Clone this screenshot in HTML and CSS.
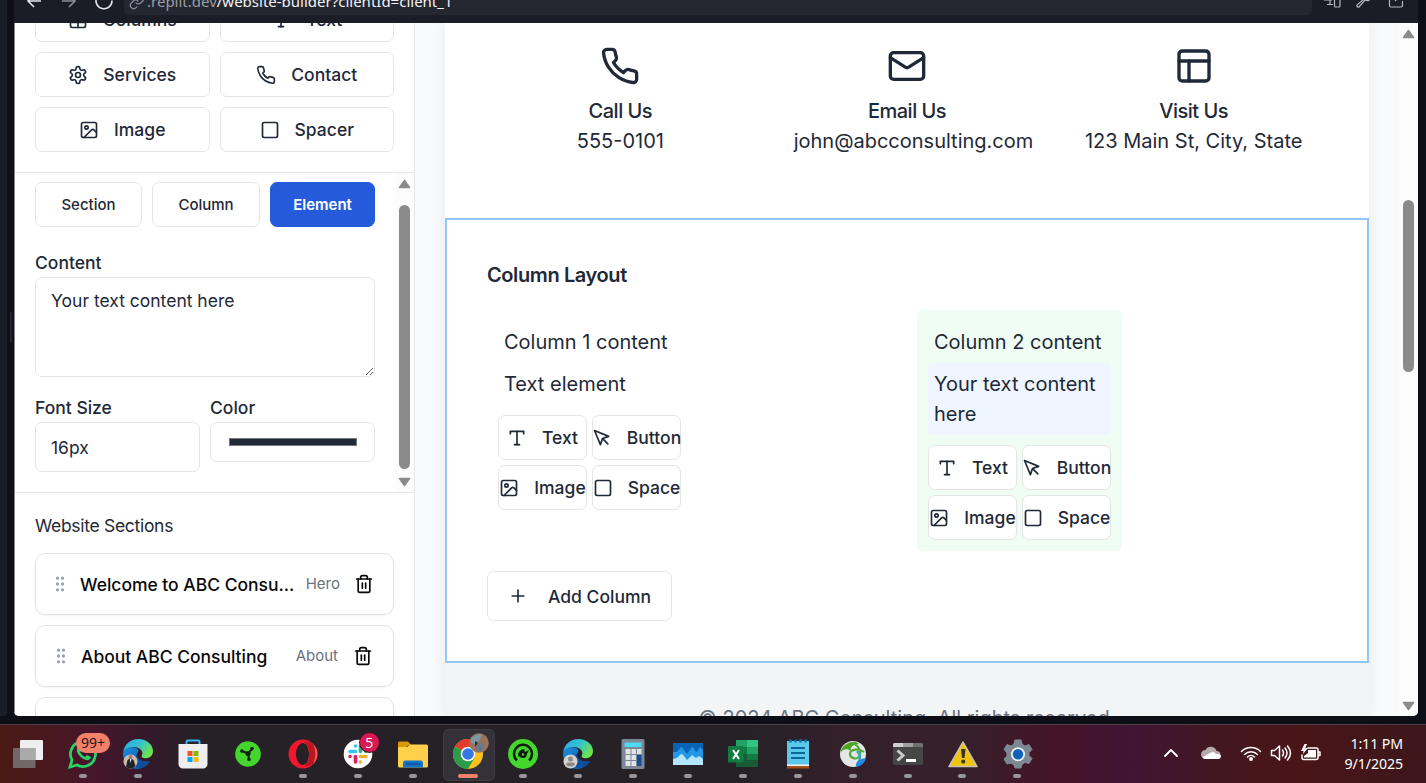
FILE: index.html
```html
<!DOCTYPE html>
<html lang="en">
<head>
<meta charset="utf-8">
<title>Website Builder</title>
<link rel="stylesheet" href="styles.css">
</head>
<body>
<svg class="defs" width="0" height="0" aria-hidden="true">
  <symbol id="i-table" viewBox="0 0 24 24"><path d="M12 3v18"/><rect width="18" height="18" x="3" y="3" rx="2"/><path d="M3 9h18"/><path d="M3 15h18"/></symbol>
  <symbol id="i-type" viewBox="0 0 24 24"><path d="M4 7V4h16v3"/><path d="M9 20h6"/><path d="M12 4v16"/></symbol>
  <symbol id="i-settings" viewBox="0 0 24 24"><path d="M12.22 2h-.44a2 2 0 0 0-2 2v.18a2 2 0 0 1-1 1.73l-.43.25a2 2 0 0 1-2 0l-.15-.08a2 2 0 0 0-2.73.73l-.22.38a2 2 0 0 0 .73 2.73l.15.1a2 2 0 0 1 1 1.72v.51a2 2 0 0 1-1 1.74l-.15.09a2 2 0 0 0-.73 2.73l.22.38a2 2 0 0 0 2.73.73l.15-.08a2 2 0 0 1 2 0l.43.25a2 2 0 0 1 1 1.73V20a2 2 0 0 0 2 2h.44a2 2 0 0 0 2-2v-.18a2 2 0 0 1 1-1.73l.43-.25a2 2 0 0 1 2 0l.15.08a2 2 0 0 0 2.73-.73l.22-.39a2 2 0 0 0-.73-2.73l-.15-.08a2 2 0 0 1-1-1.74v-.5a2 2 0 0 1 1-1.74l.15-.09a2 2 0 0 0 .73-2.73l-.22-.38a2 2 0 0 0-2.73-.73l-.15.08a2 2 0 0 1-2 0l-.43-.25a2 2 0 0 1-1-1.73V4a2 2 0 0 0-2-2z"/><circle cx="12" cy="12" r="3"/></symbol>
  <symbol id="i-phone" viewBox="0 0 24 24"><path d="M22 16.92v3a2 2 0 0 1-2.18 2 19.79 19.79 0 0 1-8.63-3.07 19.5 19.5 0 0 1-6-6 19.79 19.79 0 0 1-3.07-8.67A2 2 0 0 1 4.11 2h3a2 2 0 0 1 2 1.72 12.84 12.84 0 0 0 .7 2.81 2 2 0 0 1-.45 2.11L8.09 9.91a16 16 0 0 0 6 6l1.27-1.27a2 2 0 0 1 2.11-.45 12.84 12.84 0 0 0 2.81.7A2 2 0 0 1 22 16.92z"/></symbol>
  <symbol id="i-image" viewBox="0 0 24 24"><rect width="18" height="18" x="3" y="3" rx="2"/><circle cx="9" cy="9" r="2"/><path d="m21 15-3.086-3.086a2 2 0 0 0-2.828 0L6 21"/></symbol>
  <symbol id="i-square" viewBox="0 0 24 24"><rect width="18" height="18" x="3" y="3" rx="2"/></symbol>
  <symbol id="i-pointer" viewBox="0 0 24 24"><path d="m3 3 7.07 16.97 2.51-7.39 7.39-2.51L3 3z"/><path d="m13 13 6 6"/></symbol>
  <symbol id="i-mail" viewBox="0 0 24 24"><rect width="20" height="16" x="2" y="4" rx="2"/><path d="m22 7-8.97 5.7a1.94 1.94 0 0 1-2.06 0L2 7"/></symbol>
  <symbol id="i-layout" viewBox="0 0 24 24"><rect width="18" height="18" x="3" y="3" rx="2"/><path d="M3 9h18"/><path d="M9 21V9"/></symbol>
  <symbol id="i-plus" viewBox="0 0 24 24"><path d="M5 12h14"/><path d="M12 5v14"/></symbol>
  <symbol id="i-trash" viewBox="0 0 24 24"><path d="M3 6h18"/><path d="M19 6v14c0 1-1 2-2 2H7c-1 0-2-1-2-2V6"/><path d="M8 6V4c0-1 1-2 2-2h4c1 0 2 1 2 2v2"/><path d="M10 11v6"/><path d="M14 11v6"/></symbol>
  <symbol id="i-grip" viewBox="0 0 24 24"><circle cx="9" cy="12" r="1"/><circle cx="9" cy="5" r="1"/><circle cx="9" cy="19" r="1"/><circle cx="15" cy="12" r="1"/><circle cx="15" cy="5" r="1"/><circle cx="15" cy="19" r="1"/></symbol>
  <symbol id="edge" viewBox="0 0 30 30">
    <defs>
      <linearGradient id="e1" x1="0" y1="0" x2="1" y2=".5"><stop offset="0" stop-color="#2aa5e6"/><stop offset=".55" stop-color="#35c2d0"/><stop offset="1" stop-color="#6be24e"/></linearGradient>
      <linearGradient id="e2" x1="0" y1="0" x2="1" y2="1"><stop offset="0" stop-color="#1b8ee0"/><stop offset="1" stop-color="#0c4a94"/></linearGradient>
    </defs>
    <path fill="url(#e2)" d="M0 15C1 9 7 7 13 9c3 1 3 3 1 6-1 5 5 9 13 7-4 6-9 8-14 8C6 29 0 23 0 15z"/>
    <path fill="#0d4f9d" d="M14 15c-6 5-2 13 3 14 5-1 8-3 10-7-8 2-14-2-13-7z"/>
    <path fill="url(#e1)" d="M0 14C1 5 8 0 15 0c9 0 15 6 15 12 0 5-4 8-9 7-2 0-3-1-2-3 2-4-3-8-8-8C6 8 1 10 0 14z"/>
  </symbol>
</svg>

<div class="browser">
  <div class="rail"></div>
  <div class="gutter"><span class="handle"></span></div>
  <div class="pane">
    <header class="urlbar">
      <svg class="nav" width="24" height="24" viewBox="0 0 24 24"><path d="M19 12H6M12 6l-6 6 6 6"/></svg>
      <svg class="nav dim" width="24" height="24" viewBox="0 0 24 24"><path d="M5 12h13M12 6l6 6-6 6"/></svg>
      <svg class="nav" width="24" height="24" viewBox="0 0 24 24"><path d="M20 11.5a8 8 0 1 1-3-6"/></svg>
      <div class="address">
        <svg class="link" width="16" height="16" viewBox="0 0 24 24"><path d="M10 13a5 5 0 0 0 7.54.54l3-3a5 5 0 0 0-7.07-7.07l-1.72 1.71"/><path d="M14 11a5 5 0 0 0-7.54-.54l-3 3a5 5 0 0 0 7.07 7.07l1.71-1.71"/></svg>
        <span class="url"><span class="host">.replit.dev</span>/website-builder?clientId=client_1</span>
      </div>
      <svg class="tool" width="20" height="20" viewBox="0 0 20 20"><path d="M2 10V4h14v4M2 10h8M8 10v4M5 14.500h6"/><rect x="12.500" y="8" width="5.500" height="9" rx="1"/></svg>
      <svg class="tool" width="20" height="20" viewBox="0 0 20 20"><path d="M10 9l-7 6a1.500 1.500 0 0 0 2 2l6-7a4 4 0 0 0 6-4l-3 2-2-2 2-3a4 4 0 0 0-4 6z"/></svg>
      <svg class="tool" width="20" height="20" viewBox="0 0 20 20"><path d="M9 4H5a1.500 1.500 0 0 0-1.500 1.500v10A1.500 1.500 0 0 0 5 17h10a1.500 1.500 0 0 0 1.500-1.500V11M9 11l7-7"/></svg>
    </header>

    <div class="app">
      <aside class="sidebar">
        <section class="blocks">
          <button class="btn"><svg class="ic"><use href="#i-table"/></svg>Columns</button>
          <button class="btn"><svg class="ic"><use href="#i-type"/></svg>Text</button>
          <button class="btn"><svg class="ic"><use href="#i-settings"/></svg>Services</button>
          <button class="btn"><svg class="ic"><use href="#i-phone"/></svg>Contact</button>
          <button class="btn"><svg class="ic"><use href="#i-image"/></svg>Image</button>
          <button class="btn"><svg class="ic"><use href="#i-square"/></svg>Spacer</button>
        </section>

        <section class="props">
          <div class="form">
            <div class="tabs">
              <button class="tab">Section</button>
              <button class="tab">Column</button>
              <button class="tab active">Element</button>
            </div>
            <label class="label">Content</label>
            <textarea class="area">Your text content here</textarea>
            <div class="fields">
              <div class="field"><label class="label">Font Size</label><div class="input">16px</div></div>
              <div class="field"><label class="label">Color</label><div class="color"><span class="swatch"></span></div></div>
            </div>
          </div>
          <div class="scroll props-scroll">
            <svg width="13" height="10" viewBox="0 0 13 10"><path d="M6.500 1.500 11.500 8.500H1.500z"/></svg>
            <span class="thumb"></span>
            <svg width="13" height="10" viewBox="0 0 13 10"><path d="M6.500 8.500 11.500 1.500H1.500z"/></svg>
          </div>
        </section>

        <section class="list">
          <h3 class="list-title">Website Sections</h3>
          <div class="item"><svg class="ic grip"><use href="#i-grip"/></svg><span class="name">Welcome to ABC Consu...</span><span class="kind">Hero</span><svg class="ic"><use href="#i-trash"/></svg></div>
          <div class="item inset"><svg class="ic grip"><use href="#i-grip"/></svg><span class="name">About ABC Consulting</span><span class="kind">About</span><svg class="ic"><use href="#i-trash"/></svg></div>
          <div class="item"></div>
        </section>
      </aside>

      <main class="canvas">
        <div class="page">
          <section class="contact">
            <div class="way"><svg class="big"><use href="#i-phone"/></svg><h4 class="way-title">Call Us</h4><p class="way-text">555-0101</p></div>
            <div class="way"><svg class="big"><use href="#i-mail"/></svg><h4 class="way-title">Email Us</h4><p class="way-text">john@abcconsulting.com</p></div>
            <div class="way"><svg class="big"><use href="#i-layout"/></svg><h4 class="way-title">Visit Us</h4><p class="way-text">123 Main St, City, State</p></div>
          </section>
          <section class="selected">
            <h3 class="sel-title">Column Layout</h3>
            <div class="cols">
              <div class="col">
                <p class="el">Column 1 content</p>
                <p class="el">Text element</p>
                <div class="adds">
                  <button class="btn"><svg class="ic"><use href="#i-type"/></svg>Text</button>
                  <button class="btn"><svg class="ic"><use href="#i-pointer"/></svg>Button</button>
                  <button class="btn"><svg class="ic"><use href="#i-image"/></svg>Image</button>
                  <button class="btn"><svg class="ic"><use href="#i-square"/></svg>Space</button>
                </div>
              </div>
              <div class="col picked">
                <p class="el">Column 2 content</p>
                <p class="el current">Your text content here</p>
                <div class="adds">
                  <button class="btn"><svg class="ic"><use href="#i-type"/></svg>Text</button>
                  <button class="btn"><svg class="ic"><use href="#i-pointer"/></svg>Button</button>
                  <button class="btn"><svg class="ic"><use href="#i-image"/></svg>Image</button>
                  <button class="btn"><svg class="ic"><use href="#i-square"/></svg>Space</button>
                </div>
              </div>
            </div>
            <button class="btn add-col"><svg class="ic"><use href="#i-plus"/></svg>Add Column</button>
          </section>
          <footer class="foot">© 2024 ABC Consulting. All rights reserved.</footer>
        </div>
      </main>
      <div class="scroll page-scroll">
        <svg width="13" height="10" viewBox="0 0 13 10"><path d="M6.500 1.500 11.500 8.500H1.500z"/></svg>
        <span class="thumb"></span>
        <svg width="13" height="10" viewBox="0 0 13 10"><path d="M6.500 8.500 11.500 1.500H1.500z"/></svg>
      </div>
    </div>
  </div>
  <div class="edge-right"></div>
</div>

<footer class="taskbar">
  <div class="apps">
    <div class="task"><svg width="30" height="30" viewBox="0 0 30 30"><rect x="7" y="1" width="23" height="20" rx="1" fill="#efefef"/><rect y="9" width="22.500" height="20" rx="1" fill="#777" opacity=".85"/><path d="M7 9h15.500v12H7z" fill="#aaa"/></svg></div>
    <div class="task run"><svg width="30" height="30" viewBox="0 0 30 30"><path d="M2 28l2-7a12.500 12.500 0 1 1 5 5z" fill="none" stroke="#25d366" stroke-width="2.800"/><path d="M10 8c-3 3 0 8 4 11 4 3 8 3 9-1l-4-2-2 2c-2-1-4-3-5-5l2-2-2-4z" fill="#25d366"/></svg><span class="badge">99+</span></div>
    <div class="task run"><svg width="30" height="30"><use href="#edge"/><circle cx="7.500" cy="22.500" r="7" fill="#c9bdb0"/><path d="M3 28l1.500-7 3-2 3 2 2 6a7 7 0 0 1-9.500 1z" fill="#202027"/><path d="M6.800 20h1.600l-.8 4z" fill="#fff"/><circle cx="7.500" cy="18" r="1.900" fill="#a87760"/></svg></div>
    <div class="task"><svg width="30" height="30" viewBox="0 0 30 30"><path d="M8.500 6V3q0-1.500 1.500-1.500h10q1.500 0 1.500 1.500v3" fill="none" stroke="#35b7f2" stroke-width="2"/><path d="M.5 5h29v20a4.500 4.500 0 0 1-4.500 4.500H5A4.500 4.500 0 0 1 .5 25z" fill="#eeeef0"/><path d="M9.500 12h5v5h-5z" fill="#f25022"/><path d="M15.500 12h5v5h-5z" fill="#7fba00"/><path d="M9.500 18h5v5h-5z" fill="#00a4ef"/><path d="M15.500 18h5v5h-5z" fill="#ffb900"/></svg></div>
    <div class="task"><svg width="30" height="30" viewBox="0 0 30 30"><circle cx="15" cy="15" r="12.800" fill="#44d62c"/><path d="M15 14.500 9 12M15 14.500l4-4.500M15 14.500l1 5.500" stroke="#10240d" stroke-width="2"/><circle cx="15" cy="14.500" r="2.600" fill="#10240d"/><circle cx="8.800" cy="12" r="1.800" fill="#10240d"/><circle cx="19" cy="9.500" r="1.800" fill="#10240d"/><circle cx="16" cy="20.500" r="1.800" fill="#10240d"/></svg></div>
    <div class="task run"><svg width="30" height="30" viewBox="0 0 30 30"><path fill-rule="evenodd" fill="#f0182c" d="M15 .500a14.500 14.500 0 1 0 0 29 14.500 14.500 0 1 0 0-29zM15 4c4 0 6 5 6 11s-2 11-6 11-7-5-7-11 3-11 7-11z"/><path d="M15 4c3-3 14.500 0 14.500 11S18 29 15 26c4 0 6-5 6-11s-2-11-6-11z" fill="#ff5550"/><path d="M15 4c3-3 9-1 10 1 3 7 3 13 0 20-2 2-7 3-10 1 4 0 6-5 6-11s-2-11-6-11z" fill="#b91622"/></svg></div>
    <div class="task run"><svg width="30" height="30" viewBox="0 0 30 30"><circle cx="15" cy="15" r="14.300" fill="#fff"/><g stroke-width="3.600" stroke-linecap="round"><path d="M12.500 7v0M7 12.500h5.500" stroke="#36c5f0"/><path d="M17.500 7v5.500M23 12.500v0" stroke="#2eb67d"/><path d="M17.500 17.500H23M17.500 23v0" stroke="#ecb22e"/><path d="M12.500 17.500V23M7 17.500v0" stroke="#e01e5a"/></g></svg><span class="badge count">5</span></div>
    <div class="task run"><svg width="30" height="30" viewBox="0 0 30 30"><path d="M0 4q0-1.500 1.500-1.500H10l3 3.500h-2L8 8H0z" fill="#dd9a05"/><path d="M0 8h9l3-2.500h16.500Q30 5.500 30 7v20q0 1.500-1.500 1.500h-27Q0 28.500 0 27z" fill="#ffd04c"/><path d="M5 28.500V24q0-2.500 2.500-2.500h15q2.500 0 2.500 2.500v4.500z" fill="#1572c4"/><path d="M8 25h14" stroke="#07509a" stroke-width="1.300"/></svg></div>
    <div class="task run focus"><svg width="30" height="30" viewBox="0 0 30 30"><circle cx="15" cy="15" r="15" fill="#fcc31e"/><path d="M15 15 2 7.500A15 15 0 0 1 28 7.500z" fill="#e33b2e"/><path d="M15 15 2 7.500A15 15 0 0 0 15 30l6.500-11z" fill="#2d9c49"/><circle cx="15" cy="15" r="7.300" fill="#fff"/><circle cx="15" cy="15" r="5.800" fill="#3578e5"/></svg><svg class="avatar" width="20" height="20" viewBox="0 0 20 20"><circle cx="10" cy="10" r="9.800" fill="#9a7359"/><path d="M2 5l7-4 4 1-3 6-5 3-3-2z" fill="#7d98a6"/><path d="M11 9l4 3-2 6-5 1-1-5z" fill="#66788f"/><path d="M6 8l3 2-3 4z" fill="#273244"/></svg></div>
    <div class="task run"><svg width="30" height="30" viewBox="0 0 30 30"><circle cx="15" cy="15" r="15" fill="#44d62c"/><path d="M9 21.500a9 9 0 1 1 12 0M11.500 17.500a4.500 4.500 0 0 1 5-6" fill="none" stroke="#0b1d09" stroke-width="2.400"/><circle cx="15" cy="15.500" r="3.500" fill="#0b1d09"/><path d="M15 14l6-3-3 6z" fill="#0b1d09"/><circle cx="15" cy="15.500" r="1.200" fill="#44d62c"/></svg></div>
    <div class="task run"><svg width="30" height="30"><use href="#edge"/><circle cx="7.500" cy="22.500" r="7" fill="#d5d3d1"/><circle cx="7.500" cy="20" r="2.500" fill="#8b8886"/><path d="M3 26q0-2.500 2-2.500h5q2 0 2 2.500-4.500 3-9 0z" fill="#8b8886"/></svg></div>
    <div class="task run"><svg width="30" height="30" viewBox="0 0 30 30"><rect x="3.500" width="23" height="30" rx="1.500" fill="#7c8794"/><path d="M6.500 3.500h17v4.500h-17z" fill="#4ddaf5"/><path d="M7.500 10h5v5h-5zM13.500 10h4.500v5h-4.500zM19 10h4.500v5H19zM7.500 16h5v5h-5zM13.500 16h4.500v5h-4.500zM7.500 22h5v5h-5zM13.500 22h4.500v5h-4.500z" fill="#dfe4e8"/><path d="M19 16h4.500v11H19z" fill="#164a91"/></svg></div>
    <div class="task run"><svg width="30" height="30" viewBox="0 0 30 30"><path d="M0 4h30v22H0z" fill="#0963b7"/><path d="M0 13h4l4-5q2 0 3 3l3 4 5-7q2 0 3 4l2 1 3-5 3 3v15H0z" fill="#2396e6"/><path d="M0 20l4-1 4-4q2 0 3 2l3 4 5-5 4 3 3-2 4 3v6H0z" fill="#b5e7fc"/></svg></div>
    <div class="task run"><svg width="30" height="30" viewBox="0 0 30 30"><path d="M8 1h22v27H8z" fill="#185c37"/><path d="M8 1h11v7H8z" fill="#21a366"/><path d="M19 1h11v7H19z" fill="#33c481"/><path d="M8 8h11v7H8z" fill="#107c41"/><path d="M19 8h11v7H19z" fill="#21a366"/><path d="M19 15h11v6H19z" fill="#107c41"/><rect y="7" width="15.500" height="16.500" rx="1.300" fill="#107c41"/><path d="M5 11l6 9M11 11l-6 9" stroke="#fff" stroke-width="2"/></svg></div>
    <div class="task run"><svg width="30" height="30" viewBox="0 0 30 30"><path d="M4 26h22v3.500H4z" fill="#a4501b"/><path d="M4 24h22v3H4z" fill="#f3f3f3"/><path d="M4 2h22v23.500H4z" fill="#5cc8ea"/><path d="M8 9h14M8 14h14M8 19h14" stroke="#0b6799" stroke-width="1.800"/><path d="M7.500.500v3M12.500.500v3M17.500.500v3M22.500.500v3" stroke="#0a7bb0" stroke-width="2.500"/></svg></div>
    <div class="task run"><svg width="30" height="30" viewBox="0 0 30 30"><circle cx="15" cy="15" r="13" fill="#e3e7e5"/><path d="M3 11C6 5 13 2 18 3l3 2c-7 0-9 4-8 7-4-3-8-2-10 1z" fill="#4ba51f"/><path d="M14 4c7 2 10 9 7 14-3 3-9 1-9-3 0-5 9-6 14-2" fill="none" stroke="#55a936" stroke-width="2.200"/><path d="M19 12c3 3 4 6 2 11" fill="none" stroke="#3ca6c0" stroke-width="2.500"/><path d="M18 28c-1-6 4-8 10-9-1 4-4 8-10 9z" fill="#2688df"/></svg></div>
    <div class="task run"><svg width="30" height="30" viewBox="0 0 30 30"><rect y="4" width="30" height="22" rx="1.500" fill="#464646"/><path d="M1.500 4H10v4H0V5.500Q0 4 1.500 4z" fill="#d0d0d0"/><path d="M10 4h10v4H10z" fill="#a0a0a0"/><path d="M20 4h8.500Q30 4 30 5.500V8H20z" fill="#707070"/><path d="M4.500 11.500 10 16.500l-5.500 5" fill="none" stroke="#c9c9c9" stroke-width="3"/><path d="M13 20h10v3H13z" fill="#fff"/></svg></div>
    <div class="task run"><svg width="30" height="30" viewBox="0 0 30 30"><path d="M15 3 1 27.500h28z" fill="#f0c30c" stroke="#c9c5b2" stroke-width="1.500" stroke-linejoin="round"/><path d="M13 10h4.500l-1 9H14z" fill="#33331f"/><circle cx="15.200" cy="22.500" r="2" fill="#33331f"/></svg></div>
    <div class="task run"><svg width="30" height="30" viewBox="0 0 30 30"><path d="M12 1h6l1 4 3 2 4-1.500 3 5-3 3v3l3 3-3 5-4-1-3 2-1 3.500h-6L11 26l-3-2-4 1-3-5 3-3v-3L1 10.500l3-5L8 7l3-2z" fill="#7e8893" stroke="#7e8893" stroke-linejoin="round"/><circle cx="15" cy="15.200" r="7" fill="#eceff2"/><circle cx="15" cy="15.200" r="5.200" fill="#0f62b8"/></svg></div>
  </div>
  <div class="tray">
    <svg width="16" height="16" viewBox="0 0 16 16"><path d="M2 11l6-6 6 6" class="ln"/></svg>
    <svg class="cloud" width="20" height="16" viewBox="0 0 20 16"><path d="M4.500 14a4.500 4.500 0 0 1 0-9A6 6 0 0 1 15.500 6a4 4 0 0 1 0 8z" fill="#b6aaac"/><path d="M2 12l9-5q3 0 4 2 5-.5 5 2.500-.5 2.500-3 2.500H4.500Q2 14 2 12z" fill="#fff"/></svg>
    <svg width="22" height="18" viewBox="0 0 22 18"><path class="ln thin" d="M1.500 7.500a13.500 13.500 0 0 1 19 0M4.500 10.500a9 9 0 0 1 13 0M7.500 13a5 5 0 0 1 7 0"/><circle cx="11" cy="15" r="2" fill="#fff"/></svg>
    <svg width="22" height="18" viewBox="0 0 22 18"><path class="ln thin" d="M1.500 6.500h3L9.500 2v14l-5-4.500h-3zM12.500 6q2 3 0 6M15 4q4 5 0 10M17.500 2q6 7 0 14"/></svg>
    <svg width="22" height="18" viewBox="0 0 22 18"><path class="ln thin" d="M8 4h8.500Q18 4 18 5.500v8q0 2-2 2H4q-2 0-2-2V11M18 8h2v3.500h-2"/><path fill="#fff" d="M8 6h8v7.500H4V12l4-3zM4.500 0 1 7h2.500L3 10l5-6H5.500L7 0z"/></svg>
    <div class="clock"><span>1:11 PM</span><span>9/1/2025</span></div>
  </div>
</footer>
</body>
</html>
```

FILE: styles.css
```css
* { box-sizing: border-box; }
body { margin: 0; width: 1426px; height: 783px; overflow: hidden; background: #0e0f16; font-family: Inter, sans-serif; color: #1f2937; }
h3, h4, p { margin: 0; }
button, textarea { font-family: inherit; color: inherit; }
.defs { display: block; height: 0; }

/* browser frame */
.browser { display: flex; height: 724px; background: #0e0f16; }
.rail { width: 7px; height: 716px; background: #1b1d26; border-radius: 0 0 4px 0; }
.gutter { width: 7px; display: flex; align-items: flex-start; justify-content: flex-end; padding: 312px 2px 0 0; background: #100f18; }
.handle { width: 2px; height: 30px; background: #24252f; }
.pane { width: 1404px; height: 716px; display: flex; flex-direction: column; border-radius: 0 0 5px 5px; overflow: hidden; }
.edge-right { width: 8px; background: #0e0e17; }
.urlbar { height: 23px; flex: none; display: flex; align-items: flex-end; overflow: hidden; background: #1b1d26; padding: 0 12px 8px 8px; }
.nav { flex: none; fill: none; stroke: #e4e6ea; stroke-width: 1.6; margin: 0 11px 2px 0; }
.nav:nth-child(3) { margin-right: 8px; }
.nav.dim { stroke: #8b8d96; }
.address { flex: 1; height: 40px; display: flex; align-items: flex-end; background: #252730; border-radius: 5px; padding: 0 0 2px 5px; }
.link { fill: none; stroke: #8f919b; stroke-width: 1.8; margin-bottom: 3px; }
.url { font: 15px/24px "Noto Sans", sans-serif; color: #f2f3f5; margin-left: 2px; white-space: nowrap; }
.host { color: #9a9ca6; }
.tool { flex: none; fill: none; stroke: #b5b7bf; stroke-width: 1.2; margin: 0 0 5px 12px; }
.tool:nth-child(5) { margin-left: 10px; }
.app { height: 693px; flex: none; display: flex; background: #fff; }

/* sidebar */
.sidebar { width: 401px; flex: none; border-right: 1px solid #e5e7eb; border-left: 1px solid #85868c; overflow: hidden; display: flex; flex-direction: column; background: #fff; }
.blocks { height: 150px; flex: none; border-bottom: 1px solid #e5e7eb; padding: 0 20px 20px; display: grid; grid-template-columns: 1fr 1fr; grid-auto-rows: 45px; gap: 10px; align-content: end; }
.btn { min-width: 0; display: flex; align-items: center; justify-content: center; gap: 15px; padding: 0; height: 45px; border: 1px solid #e5e5e5; border-radius: 7px; background: #fff; font-size: 17.5px; font-weight: 500; white-space: nowrap; }
.ic { width: 20px; height: 20px; flex: none; fill: none; stroke: currentColor; stroke-width: 2; stroke-linecap: round; stroke-linejoin: round; }
.props { height: 320px; flex: none; display: flex; border-bottom: 1px solid #e5e7eb; }
.form { width: 380px; padding: 9px 20px 0; }
.tabs { display: grid; grid-template-columns: 107px 108px 105px; gap: 10px; margin-bottom: 26px; }
.tab { height: 45px; padding: 0; border: 1px solid #e5e5e5; border-radius: 7px; background: #fff; font-size: 15px; font-weight: 500; }
.tab.active { background: #255bdb; border-color: #255bdb; color: #fff; font-weight: 600; }
.label { display: block; font-size: 17.5px; line-height: 20px; height: 24px; font-weight: 500; }
.area { display: block; width: 340px; height: 100px; resize: vertical; border: 1px solid #e5e5e5; border-radius: 7px; padding: 10px 15px; font-size: 17.5px; line-height: 25px; outline: 0; background: #fff; }
.fields { display: grid; grid-template-columns: 165px 165px; gap: 10px; margin-top: 21px; }
.input { height: 50px; display: flex; align-items: center; padding: 0 15px; border: 1px solid #e5e5e5; border-radius: 7px; font-size: 17.5px; }
.color { height: 40px; display: flex; align-items: center; justify-content: center; border: 1px solid #e5e5e5; border-radius: 7px; }
.swatch { width: 128px; height: 8px; background: #1f2937; border: 1px solid #777; }
.scroll { width: 19px; display: flex; flex-direction: column; align-items: center; background: #fcfcfc; flex: none; }
.scroll svg { fill: #8b8b8b; stroke: #8b8b8b; stroke-width: 1.6; stroke-linejoin: round; flex: none; }
.thumb { width: 11px; border-radius: 6px; background: #8b8b8b; flex: none; }
.props-scroll { padding-top: 6px; }
.props-scroll .thumb { height: 264px; margin: 16px 0 8px; }
.list { padding: 20px 20px 0; }
.list-title { font-size: 17.5px; line-height: 25px; font-weight: 400; letter-spacing: -.3px; margin-bottom: 15px; }
.item { height: 62px; display: flex; align-items: center; border: 1px solid #e2e3e5; border-radius: 10px; margin-bottom: 10px; padding: 0 19px 0 14px; color: #09090b; box-shadow: 0 1px 2px rgba(0,0,0,.06); }
.item.inset { padding: 0 20px 0 15px; }
.grip { color: #9ca3af; }
.name { flex: 1; margin-left: 10px; font-size: 17.5px; font-weight: 500; letter-spacing: -.02px; white-space: nowrap; }
.kind { font-size: 15px; color: #6b7280; margin-right: 14px; padding-bottom: 2px; }
.item.inset .kind { margin-right: 15px; }

/* canvas */
.canvas { flex: 1; background: #f9fafb; padding: 0 30px; overflow: hidden; }
.page { height: 693px; background: #fff; box-shadow: 0 0 16px rgba(0,0,0,.07); }
.contact { height: 195px; padding: 23px 42px 0; display: grid; grid-template-columns: repeat(3, minmax(0, 1fr)); gap: 20px; text-align: center; }
.way { padding: 0 20px; font-size: 20px; line-height: 30px; white-space: nowrap; }
.big { display: block; width: 40px; height: 40px; margin: 0 auto 10px; fill: none; stroke: currentColor; stroke-width: 2; stroke-linecap: round; stroke-linejoin: round; }
.way-title { font-size: 20px; font-weight: 500; letter-spacing: -.5px; }
.selected { height: 445px; border: 2px solid #93c5fd; padding: 40px; }
.sel-title { font-size: 20px; line-height: 30px; font-weight: 600; letter-spacing: -.4px; margin-bottom: 20px; }
.cols { display: grid; grid-template-columns: 410px 410px; gap: 20px; align-items: start; height: 241px; margin-bottom: 20px; }
.col { width: 205px; padding: 11px; border-radius: 5px; }
.col.picked { background: #f0fdf4; }
.el { padding: 6px; font-size: 20px; line-height: 30px; border-radius: 5px; }
.el.current { background: #eff6ff; }
.adds { display: grid; grid-template-columns: 89px 89px; gap: 5px; margin-top: 10px; }
.add-col { width: 185px; height: 50px; gap: 20px; }
.foot { height: 53px; background: #f3f4f6; padding-top: 40px; text-align: center; font-size: 20px; line-height: 30px; color: #6b7280; overflow: hidden; }
.page-scroll { padding-top: 6px; }
.page-scroll .thumb { height: 172px; margin: 161px 0 329px; }

/* taskbar */
.taskbar { height: 59px; display: flex; justify-content: space-between; border-top: 1px solid #4c4148; background: linear-gradient(90deg, #4b1a15 0, #46162b 95px, #33192a 150px, #252127 200px, #252127 740px, #34202b 850px, #35202c 960px, #451328 1060px, #401535 1130px, #431720 1220px, #4a1517 1300px, #3c171b 1426px); }
.apps { display: flex; padding-left: 1px; }
.task { position: relative; width: 54.97px; display: flex; align-items: flex-start; justify-content: center; padding-top: 14px; }
.task > svg { flex: none; }
.task.run::after { content: ""; position: absolute; bottom: 5px; left: 23px; width: 8px; height: 4px; border-radius: 2px; background: #99969b; }
.task.focus::before { content: ""; position: absolute; top: 4px; left: 2px; width: 50px; height: 50px; border-radius: 5px; border: 1px solid #3f3b42; background: #343138; }
.task.focus > svg { position: relative; }
.task.focus::after { left: 17px; width: 20px; background: #f2826a; }
.badge { position: absolute; left: 20px; top: 8px; width: 34px; height: 20px; border-radius: 10px; background: #f3806a; color: #1c0f10; font: 14px/20px "Open Sans", sans-serif; text-align: center; }
.badge.count { left: 29px; top: 8px; width: 19px; height: 19px; background: #d81b54; color: #fff; line-height: 19px; box-shadow: 0 0 0 1px #4d0e27; }
.task.focus > .avatar { position: absolute; left: 28px; top: 8px; }
.tray { display: flex; align-items: center; padding: 0 23px 2px 0; }
.tray > svg { flex: none; }
.tray > svg + svg { margin-left: 8px; }
.tray > svg.cloud { margin: 0 11px 0 22px; }
.ln { fill: none; stroke: #fff; stroke-width: 1.8; stroke-linecap: round; stroke-linejoin: round; }
.ln.thin { stroke-width: 1.5; }
.clock { width: 81px; display: flex; flex-direction: column; align-items: flex-end; padding-top: 1px; font: 14.2px/20px "Noto Sans", sans-serif; letter-spacing: -.1px; color: #fff; }
```
